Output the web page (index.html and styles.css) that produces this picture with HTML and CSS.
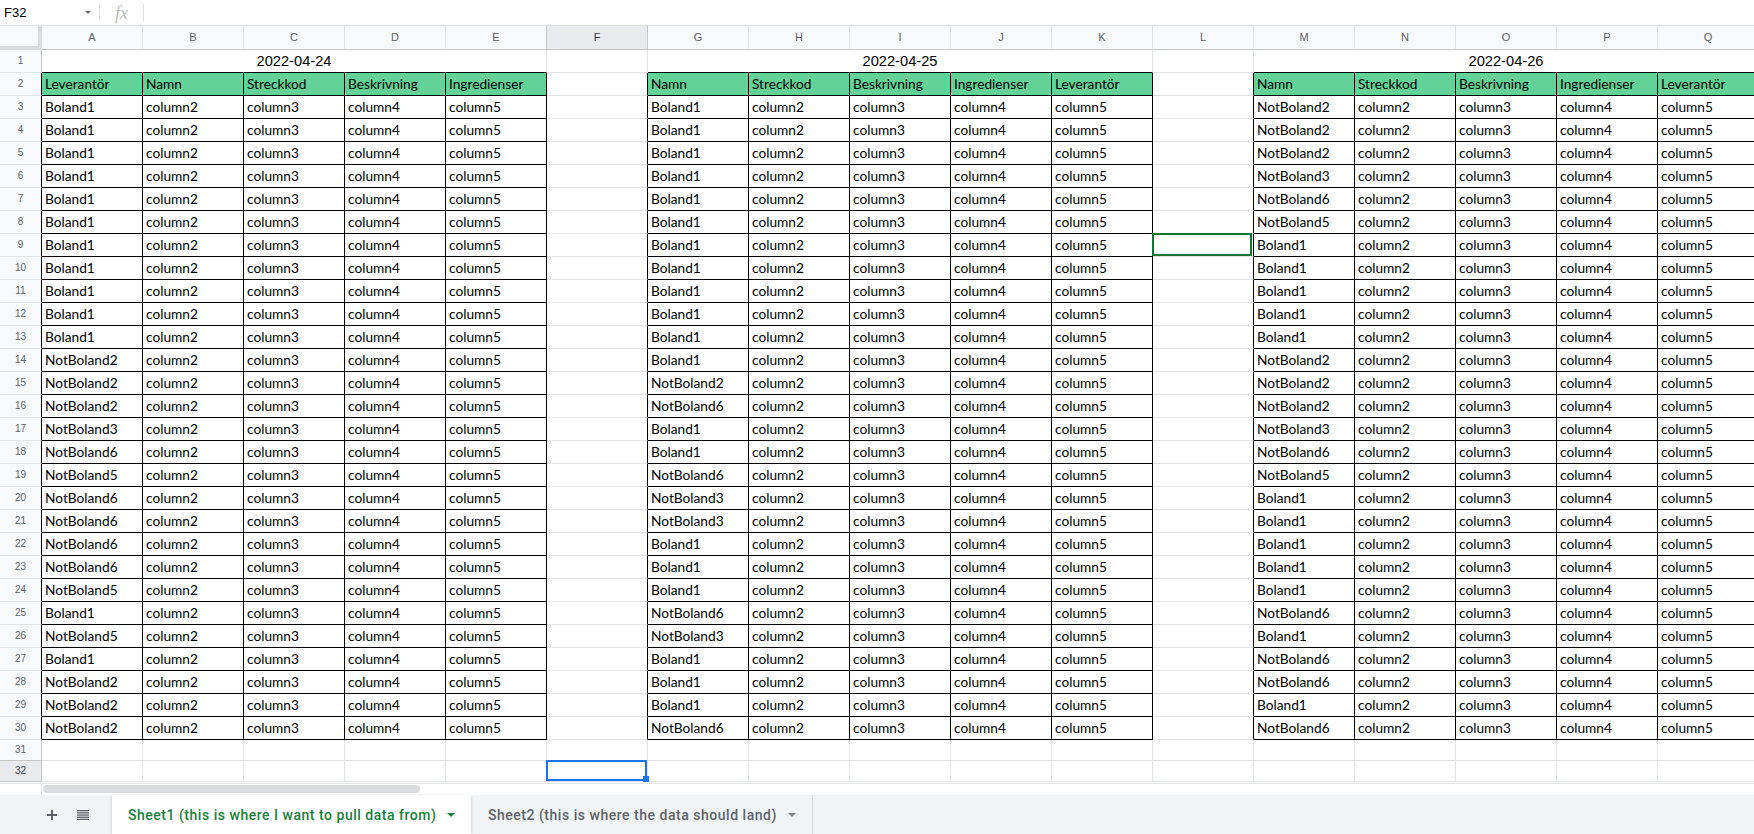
FILE: index.html
```html
<!DOCTYPE html>
<html lang="sv">
<head>
<meta charset="utf-8">
<title>Sheet</title>
<link rel="stylesheet" href="styles.css">
</head>
<body>
<div class="app">
  <div class="fbar">
    <div class="namebox"><span class="ref">F32</span><span class="caret"></span></div>
    <div class="sep"></div>
    <div class="fx">fx</div>
    <div class="sep"></div>
  </div>

  <div class="grid">
    <div class="corner"></div>
    <div class="ch">A</div><div class="ch">B</div><div class="ch">C</div><div class="ch">D</div><div class="ch">E</div><div class="ch on">F</div><div class="ch">G</div><div class="ch">H</div><div class="ch">I</div><div class="ch">J</div><div class="ch">K</div><div class="ch">L</div><div class="ch">M</div><div class="ch">N</div><div class="ch">O</div><div class="ch">P</div><div class="ch">Q</div>

    <div class="rh">1</div><div class="date">2022-04-24</div><div class="c"></div><div class="date">2022-04-25</div><div class="c"></div><div class="date">2022-04-26</div>

    <div class="rh k">2</div><div class="c t h">Leverantör</div><div class="c t h">Namn</div><div class="c t h">Streckkod</div><div class="c t h">Beskrivning</div><div class="c t h">Ingredienser</div><div class="c k"></div><div class="c t h">Namn</div><div class="c t h">Streckkod</div><div class="c t h">Beskrivning</div><div class="c t h">Ingredienser</div><div class="c t h">Leverantör</div><div class="c k"></div><div class="c t h">Namn</div><div class="c t h">Streckkod</div><div class="c t h">Beskrivning</div><div class="c t h">Ingredienser</div><div class="c t h">Leverantör</div>

    <div class="rh k">3</div><div class="c t">Boland1</div><div class="c t">column2</div><div class="c t">column3</div><div class="c t">column4</div><div class="c t">column5</div><div class="c k"></div><div class="c t">Boland1</div><div class="c t">column2</div><div class="c t">column3</div><div class="c t">column4</div><div class="c t">column5</div><div class="c k"></div><div class="c t">NotBoland2</div><div class="c t">column2</div><div class="c t">column3</div><div class="c t">column4</div><div class="c t">column5</div>
    <div class="rh k">4</div><div class="c t">Boland1</div><div class="c t">column2</div><div class="c t">column3</div><div class="c t">column4</div><div class="c t">column5</div><div class="c k"></div><div class="c t">Boland1</div><div class="c t">column2</div><div class="c t">column3</div><div class="c t">column4</div><div class="c t">column5</div><div class="c k"></div><div class="c t">NotBoland2</div><div class="c t">column2</div><div class="c t">column3</div><div class="c t">column4</div><div class="c t">column5</div>
    <div class="rh k">5</div><div class="c t">Boland1</div><div class="c t">column2</div><div class="c t">column3</div><div class="c t">column4</div><div class="c t">column5</div><div class="c k"></div><div class="c t">Boland1</div><div class="c t">column2</div><div class="c t">column3</div><div class="c t">column4</div><div class="c t">column5</div><div class="c k"></div><div class="c t">NotBoland2</div><div class="c t">column2</div><div class="c t">column3</div><div class="c t">column4</div><div class="c t">column5</div>
    <div class="rh k">6</div><div class="c t">Boland1</div><div class="c t">column2</div><div class="c t">column3</div><div class="c t">column4</div><div class="c t">column5</div><div class="c k"></div><div class="c t">Boland1</div><div class="c t">column2</div><div class="c t">column3</div><div class="c t">column4</div><div class="c t">column5</div><div class="c k"></div><div class="c t">NotBoland3</div><div class="c t">column2</div><div class="c t">column3</div><div class="c t">column4</div><div class="c t">column5</div>
    <div class="rh k">7</div><div class="c t">Boland1</div><div class="c t">column2</div><div class="c t">column3</div><div class="c t">column4</div><div class="c t">column5</div><div class="c k"></div><div class="c t">Boland1</div><div class="c t">column2</div><div class="c t">column3</div><div class="c t">column4</div><div class="c t">column5</div><div class="c k"></div><div class="c t">NotBoland6</div><div class="c t">column2</div><div class="c t">column3</div><div class="c t">column4</div><div class="c t">column5</div>
    <div class="rh k">8</div><div class="c t">Boland1</div><div class="c t">column2</div><div class="c t">column3</div><div class="c t">column4</div><div class="c t">column5</div><div class="c k"></div><div class="c t">Boland1</div><div class="c t">column2</div><div class="c t">column3</div><div class="c t">column4</div><div class="c t">column5</div><div class="c k"></div><div class="c t">NotBoland5</div><div class="c t">column2</div><div class="c t">column3</div><div class="c t">column4</div><div class="c t">column5</div>
    <div class="rh k">9</div><div class="c t">Boland1</div><div class="c t">column2</div><div class="c t">column3</div><div class="c t">column4</div><div class="c t">column5</div><div class="c k"></div><div class="c t">Boland1</div><div class="c t">column2</div><div class="c t">column3</div><div class="c t">column4</div><div class="c t">column5</div><div class="c k cur"></div><div class="c t">Boland1</div><div class="c t">column2</div><div class="c t">column3</div><div class="c t">column4</div><div class="c t">column5</div>
    <div class="rh k">10</div><div class="c t">Boland1</div><div class="c t">column2</div><div class="c t">column3</div><div class="c t">column4</div><div class="c t">column5</div><div class="c k"></div><div class="c t">Boland1</div><div class="c t">column2</div><div class="c t">column3</div><div class="c t">column4</div><div class="c t">column5</div><div class="c k"></div><div class="c t">Boland1</div><div class="c t">column2</div><div class="c t">column3</div><div class="c t">column4</div><div class="c t">column5</div>
    <div class="rh k">11</div><div class="c t">Boland1</div><div class="c t">column2</div><div class="c t">column3</div><div class="c t">column4</div><div class="c t">column5</div><div class="c k"></div><div class="c t">Boland1</div><div class="c t">column2</div><div class="c t">column3</div><div class="c t">column4</div><div class="c t">column5</div><div class="c k"></div><div class="c t">Boland1</div><div class="c t">column2</div><div class="c t">column3</div><div class="c t">column4</div><div class="c t">column5</div>
    <div class="rh k">12</div><div class="c t">Boland1</div><div class="c t">column2</div><div class="c t">column3</div><div class="c t">column4</div><div class="c t">column5</div><div class="c k"></div><div class="c t">Boland1</div><div class="c t">column2</div><div class="c t">column3</div><div class="c t">column4</div><div class="c t">column5</div><div class="c k"></div><div class="c t">Boland1</div><div class="c t">column2</div><div class="c t">column3</div><div class="c t">column4</div><div class="c t">column5</div>
    <div class="rh k">13</div><div class="c t">Boland1</div><div class="c t">column2</div><div class="c t">column3</div><div class="c t">column4</div><div class="c t">column5</div><div class="c k"></div><div class="c t">Boland1</div><div class="c t">column2</div><div class="c t">column3</div><div class="c t">column4</div><div class="c t">column5</div><div class="c k"></div><div class="c t">Boland1</div><div class="c t">column2</div><div class="c t">column3</div><div class="c t">column4</div><div class="c t">column5</div>
    <div class="rh k">14</div><div class="c t">NotBoland2</div><div class="c t">column2</div><div class="c t">column3</div><div class="c t">column4</div><div class="c t">column5</div><div class="c k"></div><div class="c t">Boland1</div><div class="c t">column2</div><div class="c t">column3</div><div class="c t">column4</div><div class="c t">column5</div><div class="c k"></div><div class="c t">NotBoland2</div><div class="c t">column2</div><div class="c t">column3</div><div class="c t">column4</div><div class="c t">column5</div>
    <div class="rh k">15</div><div class="c t">NotBoland2</div><div class="c t">column2</div><div class="c t">column3</div><div class="c t">column4</div><div class="c t">column5</div><div class="c k"></div><div class="c t">NotBoland2</div><div class="c t">column2</div><div class="c t">column3</div><div class="c t">column4</div><div class="c t">column5</div><div class="c k"></div><div class="c t">NotBoland2</div><div class="c t">column2</div><div class="c t">column3</div><div class="c t">column4</div><div class="c t">column5</div>
    <div class="rh k">16</div><div class="c t">NotBoland2</div><div class="c t">column2</div><div class="c t">column3</div><div class="c t">column4</div><div class="c t">column5</div><div class="c k"></div><div class="c t">NotBoland6</div><div class="c t">column2</div><div class="c t">column3</div><div class="c t">column4</div><div class="c t">column5</div><div class="c k"></div><div class="c t">NotBoland2</div><div class="c t">column2</div><div class="c t">column3</div><div class="c t">column4</div><div class="c t">column5</div>
    <div class="rh k">17</div><div class="c t">NotBoland3</div><div class="c t">column2</div><div class="c t">column3</div><div class="c t">column4</div><div class="c t">column5</div><div class="c k"></div><div class="c t">Boland1</div><div class="c t">column2</div><div class="c t">column3</div><div class="c t">column4</div><div class="c t">column5</div><div class="c k"></div><div class="c t">NotBoland3</div><div class="c t">column2</div><div class="c t">column3</div><div class="c t">column4</div><div class="c t">column5</div>
    <div class="rh k">18</div><div class="c t">NotBoland6</div><div class="c t">column2</div><div class="c t">column3</div><div class="c t">column4</div><div class="c t">column5</div><div class="c k"></div><div class="c t">Boland1</div><div class="c t">column2</div><div class="c t">column3</div><div class="c t">column4</div><div class="c t">column5</div><div class="c k"></div><div class="c t">NotBoland6</div><div class="c t">column2</div><div class="c t">column3</div><div class="c t">column4</div><div class="c t">column5</div>
    <div class="rh k">19</div><div class="c t">NotBoland5</div><div class="c t">column2</div><div class="c t">column3</div><div class="c t">column4</div><div class="c t">column5</div><div class="c k"></div><div class="c t">NotBoland6</div><div class="c t">column2</div><div class="c t">column3</div><div class="c t">column4</div><div class="c t">column5</div><div class="c k"></div><div class="c t">NotBoland5</div><div class="c t">column2</div><div class="c t">column3</div><div class="c t">column4</div><div class="c t">column5</div>
    <div class="rh k">20</div><div class="c t">NotBoland6</div><div class="c t">column2</div><div class="c t">column3</div><div class="c t">column4</div><div class="c t">column5</div><div class="c k"></div><div class="c t">NotBoland3</div><div class="c t">column2</div><div class="c t">column3</div><div class="c t">column4</div><div class="c t">column5</div><div class="c k"></div><div class="c t">Boland1</div><div class="c t">column2</div><div class="c t">column3</div><div class="c t">column4</div><div class="c t">column5</div>
    <div class="rh k">21</div><div class="c t">NotBoland6</div><div class="c t">column2</div><div class="c t">column3</div><div class="c t">column4</div><div class="c t">column5</div><div class="c k"></div><div class="c t">NotBoland3</div><div class="c t">column2</div><div class="c t">column3</div><div class="c t">column4</div><div class="c t">column5</div><div class="c k"></div><div class="c t">Boland1</div><div class="c t">column2</div><div class="c t">column3</div><div class="c t">column4</div><div class="c t">column5</div>
    <div class="rh k">22</div><div class="c t">NotBoland6</div><div class="c t">column2</div><div class="c t">column3</div><div class="c t">column4</div><div class="c t">column5</div><div class="c k"></div><div class="c t">Boland1</div><div class="c t">column2</div><div class="c t">column3</div><div class="c t">column4</div><div class="c t">column5</div><div class="c k"></div><div class="c t">Boland1</div><div class="c t">column2</div><div class="c t">column3</div><div class="c t">column4</div><div class="c t">column5</div>
    <div class="rh k">23</div><div class="c t">NotBoland6</div><div class="c t">column2</div><div class="c t">column3</div><div class="c t">column4</div><div class="c t">column5</div><div class="c k"></div><div class="c t">Boland1</div><div class="c t">column2</div><div class="c t">column3</div><div class="c t">column4</div><div class="c t">column5</div><div class="c k"></div><div class="c t">Boland1</div><div class="c t">column2</div><div class="c t">column3</div><div class="c t">column4</div><div class="c t">column5</div>
    <div class="rh k">24</div><div class="c t">NotBoland5</div><div class="c t">column2</div><div class="c t">column3</div><div class="c t">column4</div><div class="c t">column5</div><div class="c k"></div><div class="c t">Boland1</div><div class="c t">column2</div><div class="c t">column3</div><div class="c t">column4</div><div class="c t">column5</div><div class="c k"></div><div class="c t">Boland1</div><div class="c t">column2</div><div class="c t">column3</div><div class="c t">column4</div><div class="c t">column5</div>
    <div class="rh k">25</div><div class="c t">Boland1</div><div class="c t">column2</div><div class="c t">column3</div><div class="c t">column4</div><div class="c t">column5</div><div class="c k"></div><div class="c t">NotBoland6</div><div class="c t">column2</div><div class="c t">column3</div><div class="c t">column4</div><div class="c t">column5</div><div class="c k"></div><div class="c t">NotBoland6</div><div class="c t">column2</div><div class="c t">column3</div><div class="c t">column4</div><div class="c t">column5</div>
    <div class="rh k">26</div><div class="c t">NotBoland5</div><div class="c t">column2</div><div class="c t">column3</div><div class="c t">column4</div><div class="c t">column5</div><div class="c k"></div><div class="c t">NotBoland3</div><div class="c t">column2</div><div class="c t">column3</div><div class="c t">column4</div><div class="c t">column5</div><div class="c k"></div><div class="c t">Boland1</div><div class="c t">column2</div><div class="c t">column3</div><div class="c t">column4</div><div class="c t">column5</div>
    <div class="rh k">27</div><div class="c t">Boland1</div><div class="c t">column2</div><div class="c t">column3</div><div class="c t">column4</div><div class="c t">column5</div><div class="c k"></div><div class="c t">Boland1</div><div class="c t">column2</div><div class="c t">column3</div><div class="c t">column4</div><div class="c t">column5</div><div class="c k"></div><div class="c t">NotBoland6</div><div class="c t">column2</div><div class="c t">column3</div><div class="c t">column4</div><div class="c t">column5</div>
    <div class="rh k">28</div><div class="c t">NotBoland2</div><div class="c t">column2</div><div class="c t">column3</div><div class="c t">column4</div><div class="c t">column5</div><div class="c k"></div><div class="c t">Boland1</div><div class="c t">column2</div><div class="c t">column3</div><div class="c t">column4</div><div class="c t">column5</div><div class="c k"></div><div class="c t">NotBoland6</div><div class="c t">column2</div><div class="c t">column3</div><div class="c t">column4</div><div class="c t">column5</div>
    <div class="rh k">29</div><div class="c t">NotBoland2</div><div class="c t">column2</div><div class="c t">column3</div><div class="c t">column4</div><div class="c t">column5</div><div class="c k"></div><div class="c t">Boland1</div><div class="c t">column2</div><div class="c t">column3</div><div class="c t">column4</div><div class="c t">column5</div><div class="c k"></div><div class="c t">Boland1</div><div class="c t">column2</div><div class="c t">column3</div><div class="c t">column4</div><div class="c t">column5</div>
    <div class="rh k">30</div><div class="c t">NotBoland2</div><div class="c t">column2</div><div class="c t">column3</div><div class="c t">column4</div><div class="c t">column5</div><div class="c k"></div><div class="c t">NotBoland6</div><div class="c t">column2</div><div class="c t">column3</div><div class="c t">column4</div><div class="c t">column5</div><div class="c k"></div><div class="c t">NotBoland6</div><div class="c t">column2</div><div class="c t">column3</div><div class="c t">column4</div><div class="c t">column5</div>

    <div class="rh sm">31</div><div class="c"></div><div class="c"></div><div class="c"></div><div class="c"></div><div class="c"></div><div class="c"></div><div class="c"></div><div class="c"></div><div class="c"></div><div class="c"></div><div class="c"></div><div class="c"></div><div class="c"></div><div class="c"></div><div class="c"></div><div class="c"></div><div class="c"></div>
    <div class="rh sm on">32</div><div class="c"></div><div class="c"></div><div class="c"></div><div class="c"></div><div class="c"></div><div class="c sel"></div><div class="c"></div><div class="c"></div><div class="c"></div><div class="c"></div><div class="c"></div><div class="c"></div><div class="c"></div><div class="c"></div><div class="c"></div><div class="c"></div><div class="c"></div>
  </div>

  <div class="hs">
    <div class="hs-rh"></div>
    <div class="thumb"></div>
  </div>

  <div class="tabbar">
    <div class="tools">
      <svg class="ico-plus" width="10" height="10" viewBox="0 0 10 10"><path d="M5 0v10M0 5h10" stroke="#5f6368" stroke-width="2" fill="none"/></svg>
      <svg class="ico-list" width="12" height="10" viewBox="0 0 12 10"><rect x="0" y="0" width="12" height="1.3" fill="#5f6368"/><rect x="0" y="2.2" width="12" height="1.3" fill="#5f6368"/><rect x="0" y="4.4" width="12" height="1.3" fill="#5f6368"/><rect x="0" y="6.6" width="12" height="1.3" fill="#5f6368"/><rect x="0" y="8.7" width="12" height="1.3" fill="#5f6368"/></svg>
    </div>
    <div class="tab active"><span class="tab-name">Sheet1 (this is where I want to pull data from)</span><span class="arrow"></span></div>
    <div class="tab other"><span class="tab-name">Sheet2 (this is where the data should land)</span><span class="arrow"></span></div>
  </div>
</div>
</body>
</html>
```

FILE: styles.css
```css
* { box-sizing: border-box; }
html, body { margin: 0; padding: 0; }
body {
  width: 1754px;
  height: 834px;
  overflow: hidden;
  background: #fff;
  color: #000;
  font-family: "Liberation Sans", Arial, sans-serif;
}
.app {
  display: flex;
  flex-direction: column;
  width: 1754px;
  height: 834px;
  overflow: hidden;
}

/* formula bar */
.fbar {
  flex: none;
  display: flex;
  align-items: center;
  height: 26px;
  border-bottom: 1px solid #e2e3e3;
}
.namebox {
  display: flex;
  align-items: center;
  width: 99px;
  height: 100%;
  padding-left: 4px;
}
.ref { font-size: 13px; color: #000; }
.caret {
  margin-left: auto;
  margin-right: 8px;
  width: 0;
  height: 0;
  border-left: 3px solid transparent;
  border-right: 3px solid transparent;
  border-top: 3px solid #757575;
}
.sep { width: 1px; height: 17px; background: #e0e0e0; }
.fx {
  width: 43px;
  text-align: center;
  font: italic 18px "Liberation Serif", "DejaVu Serif", serif;
  color: #bdbdbd;
  line-height: 20px;
}

/* grid */
.grid {
  flex: none;
  display: grid;
  grid-template-columns: 42px repeat(17, 101px);
  grid-template-rows: 24px repeat(30, 23px) 21px 21px;
  width: 1759px;
}
.grid > div {
  border-right: 1px solid #e2e3e3;
  border-bottom: 1px solid #e2e3e3;
  white-space: nowrap;
}
.grid .corner {
  background: #f8f9fa;
  border-right: 4px solid #dadce0;
  border-bottom: 4px solid #dadce0;
}
.grid .ch {
  background: #f8f9fa;
  border-bottom-color: #c4c7c5;
  color: #5f6368;
  font-size: 11px;
  line-height: 23px;
  text-align: center;
}
.grid .ch.on {
  background: #e8eaed;
  border-right-color: #c4c7c5;
  box-shadow: -1px 0 0 #c4c7c5;
  color: #3c4043;
}
.grid .rh {
  background: #f8f9fa;
  border-right-color: #c4c7c5;
  color: #5f6368;
  font-size: 10px;
  line-height: 22px;
  text-align: center;
}
.grid .rh.sm { line-height: 20px; }
.grid .rh.on {
  background: #e8eaed;
  border-bottom-color: #c4c7c5;
  box-shadow: 0 -1px 0 #c4c7c5;
  color: #3c4043;
}
.grid .k { border-right-color: #000; }
.grid .t { border-right-color: #000; border-bottom-color: #000; }
.c {
  font-family: Lato, "Open Sans", sans-serif;
  font-size: 13.7px;
  line-height: 22px;
  padding-left: 3px;
  overflow: hidden;
}
.h { background: #63d297; }
.grid .date {
  grid-column: span 5;
  border-bottom-color: #000;
  text-align: center;
  font-family: "Liberation Sans", Arial, sans-serif;
  font-size: 14.67px;
  line-height: 22px;
}

/* selections */
.grid .sel, .grid .cur { position: relative; overflow: visible; }
.sel::after {
  content: "";
  position: absolute;
  left: -1px;
  top: -1px;
  right: 0;
  bottom: 0;
  border: 2px solid #1a73e8;
}
.sel::before {
  content: "";
  position: absolute;
  right: -2px;
  bottom: -1px;
  width: 6px;
  height: 6px;
  background: #1a73e8;
  z-index: 1;
}
.cur::after {
  content: "";
  position: absolute;
  left: -1px;
  top: -1px;
  right: 1px;
  bottom: 0;
  border: 2px solid #137333;
}

/* horizontal scroll */
.hs {
  flex: none;
  display: flex;
  height: 12px;
  margin-top: 1px;
  border-top: 1px solid #e2e3e3;
}
.hs-rh { width: 42px; border-right: 1px solid #e2e3e3; }
.thumb {
  margin: 1px 0 0 1px;
  width: 377px;
  height: 8px;
  border-radius: 4px;
  background: #dadce0;
}

/* tab bar */
.tabbar {
  flex: 1;
  display: flex;
  background: #f1f3f4;
}
.tools {
  width: 112px;
  display: flex;
  align-items: center;
  padding-left: 47px;
  gap: 20px;
}
.tab {
  display: flex;
  align-items: center;
  font-family: Roboto, "Liberation Sans", sans-serif;
  font-weight: 500;
  font-size: 14px;
  letter-spacing: 0.52px;
}
.tab.active {
  width: 359px;
  padding-left: 16px;
  background: #fff;
  color: #188038;
  box-shadow: 0 1px 3px rgba(60, 64, 67, 0.25);
}
.tab.other {
  width: 342px;
  padding-left: 17px;
  color: #5f6368;
  border-right: 1px solid #dadce0;
}
.arrow {
  margin-left: 11px;
  width: 0;
  height: 0;
  border-left: 4px solid transparent;
  border-right: 4px solid transparent;
  border-top: 4px solid currentColor;
}
.tab.other .arrow { border-top-color: #80868b; }
```
